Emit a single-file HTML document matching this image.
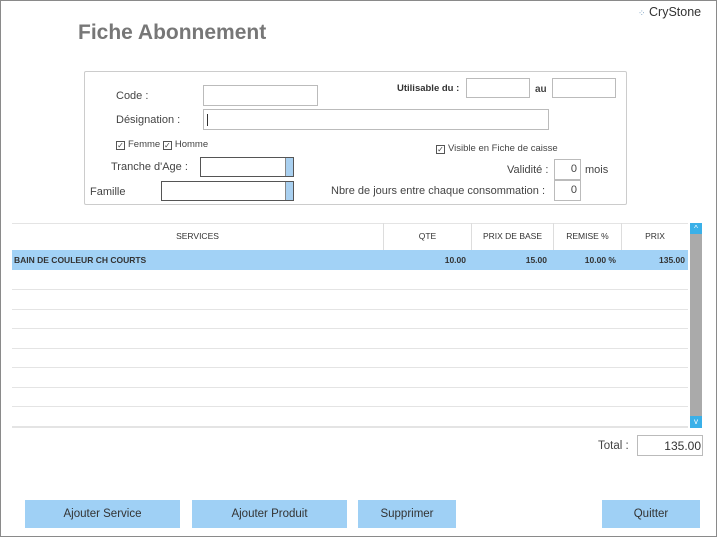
<!DOCTYPE html>
<html><head><meta charset="utf-8"><style>
*{margin:0;padding:0;box-sizing:border-box}
body{width:717px;height:538px;background:#fff;font-family:"Liberation Sans",sans-serif;color:#444;position:relative;overflow:hidden}
.frame{position:absolute;left:0;top:0;width:717px;height:537px;border:1px solid #8a8a8a}
.a{position:absolute}
.t{font-size:11px;color:#444;white-space:nowrap}
.in{position:absolute;border:1px solid #bbb;background:#fff}
.cb{display:inline-block;width:9px;height:9px;border:1px solid #555;font-size:8px;line-height:7px;text-align:center;vertical-align:-1px;margin-right:3px}
.btn{position:absolute;top:500px;height:28px;background:#9fd0f5;font-size:11.5px;color:#333;text-align:center;line-height:29px}
.row{position:absolute;left:12px;width:676px;height:1px;background:#e4e4e4}
.hd{position:absolute;top:223px;height:27px;font-size:8.5px;color:#333;text-align:center;line-height:27px;border-left:1px solid #ddd}
.c{position:absolute;top:250px;height:20px;line-height:20px;font-size:8.5px;font-weight:bold;color:#333;text-align:right}
</style></head><body>
<div class="frame"></div>
<div class="a t" style="left:638px;top:5px;font-size:12.5px;color:#333"><span style="color:#7aa0c0;font-size:9px">⁘</span> CryStone</div>
<div class="a" style="left:78px;top:21px;font-size:21px;font-weight:bold;color:#777">Fiche Abonnement</div>

<div class="a" style="left:84px;top:71px;width:543px;height:134px;border:1px solid #ccc;border-radius:2px"></div>
<div class="a t" style="left:116px;top:90px">Code :</div>
<div class="in" style="left:203px;top:85px;width:115px;height:21px"></div>
<div class="a t" style="left:397px;top:83px;font-weight:bold;font-size:9.5px;color:#333">Utilisable du :</div>
<div class="in" style="left:466px;top:78px;width:64px;height:20px"></div>
<div class="a t" style="left:535px;top:84px;font-weight:bold;font-size:10px">au</div>
<div class="in" style="left:552px;top:78px;width:64px;height:20px"></div>
<div class="a t" style="left:116px;top:114px">Désignation :</div>
<div class="in" style="left:203px;top:109px;width:346px;height:21px"><div style="position:absolute;left:3px;top:4px;width:1px;height:12px;background:#333"></div></div>
<div class="a t" style="left:116px;top:139px;font-size:9.5px"><span class="cb">✓</span>Femme <span class="cb">✓</span>Homme</div>
<div class="a t" style="left:436px;top:143px;font-size:9.5px"><span class="cb">✓</span>Visible en Fiche de caisse</div>
<div class="a t" style="left:111px;top:161px">Tranche d'Age :</div>
<div class="in" style="left:200px;top:157px;width:94px;height:20px;border-color:#555"><div style="position:absolute;right:0;top:0;width:8px;height:18px;background:#a9d0f0;border-left:1px solid #888"></div></div>
<div class="a t" style="left:90px;top:186px">Famille</div>
<div class="in" style="left:161px;top:181px;width:133px;height:20px;border-color:#555"><div style="position:absolute;right:0;top:0;width:8px;height:18px;background:#a9d0f0;border-left:1px solid #888"></div></div>
<div class="a t" style="left:507px;top:164px">Validité :</div>
<div class="in" style="left:554px;top:159px;width:27px;height:21px;text-align:right;font-size:11px;padding:3px 3px">0</div>
<div class="a t" style="left:585px;top:164px">mois</div>
<div class="a t" style="left:331px;top:185px">Nbre de jours entre chaque consommation :</div>
<div class="in" style="left:554px;top:180px;width:27px;height:21px;text-align:right;font-size:11px;padding:3px 3px">0</div>

<div class="a" style="left:12px;top:223px;width:676px;height:1px;background:#e4e4e4"></div>
<div class="hd" style="left:12px;width:371px;border-left:none">SERVICES</div>
<div class="hd" style="left:383px;width:88px">QTE</div>
<div class="hd" style="left:471px;width:82px">PRIX DE BASE</div>
<div class="hd" style="left:553px;width:68px">REMISE %</div>
<div class="hd" style="left:621px;width:67px">PRIX</div>
<div class="a" style="left:12px;top:250px;width:676px;height:20px;background:#a2d2f6"></div>
<div class="c" style="left:14px;text-align:left">BAIN DE COULEUR CH COURTS</div>
<div class="c" style="left:383px;width:83px">10.00</div>
<div class="c" style="left:471px;width:76px">15.00</div>
<div class="c" style="left:553px;width:63px">10.00 %</div>
<div class="c" style="left:621px;width:64px">135.00</div>
<div class="row" style="top:289px"></div><div class="row" style="top:309px"></div><div class="row" style="top:328px"></div><div class="row" style="top:348px"></div><div class="row" style="top:367px"></div><div class="row" style="top:387px"></div><div class="row" style="top:406px"></div><div class="row" style="top:426px;height:2px"></div>
<div class="a" style="left:690px;top:223px;width:12px;height:205px;background:#aaa"></div>
<div class="a" style="left:690px;top:223px;width:12px;height:11px;background:#3ab0e8;color:#fff;font-size:8px;text-align:center;line-height:11px">^</div>
<div class="a" style="left:690px;top:416px;width:12px;height:12px;background:#3ab0e8;color:#fff;font-size:8px;text-align:center;line-height:12px">v</div>

<div class="a t" style="left:598px;top:440px;font-size:11.5px">Total :</div>
<div class="in" style="left:637px;top:435px;width:66px;height:21px;text-align:right;font-size:12px;padding:3px 1px;color:#333">135.00</div>

<div class="btn" style="left:25px;width:155px">Ajouter Service</div>
<div class="btn" style="left:192px;width:155px">Ajouter Produit</div>
<div class="btn" style="left:358px;width:98px">Supprimer</div>
<div class="btn" style="left:602px;width:98px">Quitter</div>
</body></html>
